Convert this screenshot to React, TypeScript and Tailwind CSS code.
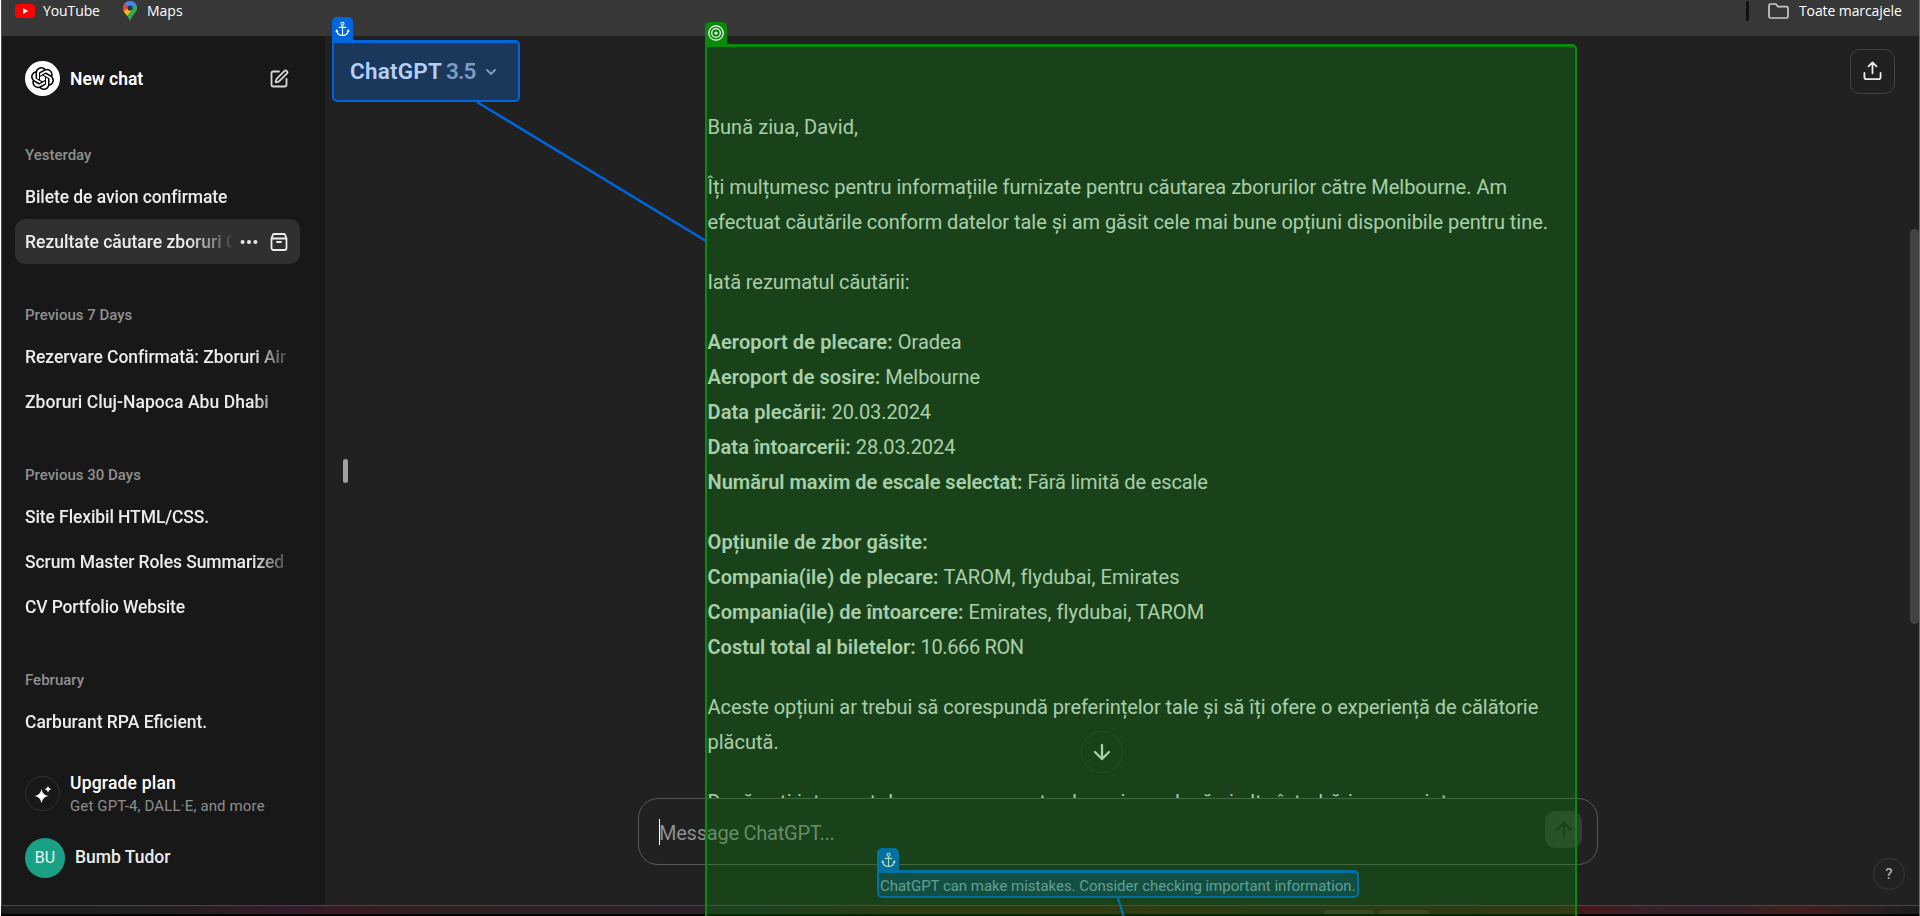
import React from 'react';
import { ArrowDown, ArrowUp, ChevronDown, Ellipsis, SquarePen } from 'lucide-react';
import { SiOpenai } from 'react-icons/si';

function AnchorIcon({ className }: { className: string }) {
  return (
    <svg viewBox="0 0 16 16" className={className} fill="none" stroke="currentColor" strokeWidth="1.2">
      <circle cx="8" cy="2.400" r="1.600" />
      <path d="M8 4v11M4 6.200h8" />
      <path d="M1.800 9.200c.2 3.400 2.600 5.600 6.200 5.700 3.600-.1 6-2.300 6.200-5.700M.9 11l.9-1.800 1.300 1.500M12.900 10.700l1.300-1.500.9 1.800" />
    </svg>
  );
}

function TargetIcon({ className }: { className: string }) {
  return (
    <svg viewBox="0 0 16 16" className={className} fill="none" stroke="currentColor" strokeWidth="1.2">
      <circle cx="8" cy="8" r="7.2" />
      <circle cx="8" cy="8" r="4.300" />
      <circle cx="8" cy="8" r="1" fill="currentColor" />
    </svg>
  );
}

function ArchiveIcon() {
  return (
    <svg viewBox="0 0 18 18" className="h-[18px] w-[18px]" fill="none" stroke="currentColor" strokeWidth="1.800" strokeLinejoin="round" strokeLinecap="round">
      <path d="M1.500 5.500 3 1.600Q3.300 1 4 1h10q.7 0 1 .6l1.500 3.900V15a2 2 0 0 1-2 2h-11a2 2 0 0 1-2-2Z" />
      <path d="M1.700 5.500h14.600M7 9h4" />
    </svg>
  );
}

function ShareIcon() {
  return (
    <svg viewBox="0 0 20 20" className="h-[19px] w-[19px]" fill="none" stroke="currentColor" strokeWidth="1.900" strokeLinecap="round" strokeLinejoin="round">
      <path d="M10 13V1.500M5.800 5.700 10 1.500l4.200 4.200M1.500 12.500v4.500a2 2 0 0 0 2 2h13a2 2 0 0 0 2-2v-4.500" />
    </svg>
  );
}

function BookmarksBar() {
  return (
    <header className="flex h-9 shrink-0 items-start bg-[#373737] pl-[13px] font-['Open_Sans',sans-serif] text-[14px] leading-[22px] text-white">
      <svg viewBox="0 0 20 14" className="mt-1 h-[14px] w-5">
        <rect width="20" height="14" rx="3.500" fill="#ff0000" />
        <path d="M8 4v6l5.200-3Z" fill="#fff" />
      </svg>
      <span className="ml-[8px] w-[80px] tracking-[-0.1px]">YouTube</span>
      <svg viewBox="0 0 14 20" className="mt-px h-5 w-[14px]">
        <clipPath id="pin">
          <path d="M7 0a7 7 0 0 1 7 7c0 4.500-4.500 6.500-7 13C4.500 13.500 0 11.500 0 7a7 7 0 0 1 7-7Z" />
        </clipPath>
        <g clipPath="url(#pin)">
          <rect width="14" height="20" fill="#34a853" />
          <path d="M0 13V6l4-1 5 4-6 7Z" fill="#fbbc04" />
          <path d="M0 9V2l2.500-.5L6 5 1.500 10Z" fill="#ea4335" />
          <path d="M2 2 7-1h4l2 4-7 7-2-4Z" fill="#4285f4" />
          <path d="m13 3-5 5 6 1V3Z" fill="#34a853" />
        </g>
        <circle cx="7" cy="7" r="2.600" fill="#26344f" />
      </svg>
      <span className="ml-[10px]">Maps</span>
      <span className="ml-auto mt-px h-5 w-[3px] rounded bg-[#111]" />
      <svg viewBox="0 0 21 16" className="ml-[19px] mt-[3px] h-4 w-[21px]" fill="none" stroke="#c8c8c8" strokeWidth="1.700" strokeLinejoin="round">
        <path d="M1 2.500Q1 1 2.500 1h5.300l2.200 2.600h8.500q1.500 0 1.500 1.500v8.400q0 1.500-1.500 1.500h-16Q1 15 1 13.500Z" />
      </svg>
      <span className="ml-[10px] mr-[16px] w-[104px] whitespace-nowrap tracking-[-0.1px]">Toate marcajele</span>
    </header>
  );
}

function Section({ label, children }: { label: string; children: React.ReactNode }) {
  return (
    <section className="mb-[31px]">
      <h3 className="flex h-[39px] items-center pl-[10px] text-[15px] font-medium text-[#909090]">{label}</h3>
      {children}
    </section>
  );
}

function Chat({ title, tracking = '' }: { title: string; tracking?: string }) {
  return (
    <div className="flex h-[45px] items-center pl-[10px]">
      <span className={`w-[263px] overflow-hidden whitespace-nowrap font-medium [mask-image:linear-gradient(to_right,#000_228px,transparent_270px)] ${tracking}`}>{title}</span>
    </div>
  );
}

function Sidebar() {
  return (
    <aside className="flex w-[323px] shrink-0 flex-col bg-[#181818] pl-[13px] pr-[25px] pt-[19px] text-[17.5px] leading-6 text-[#ececec]">
      <div className="mb-[34px] mt-px flex h-[45px] items-center pl-[10px] pr-[11px]">
        <span className="flex h-[35px] w-[35px] items-center justify-center rounded-full bg-white text-black">
          <SiOpenai className="h-[23px] w-[23px]" />
        </span>
        <span className="ml-[10px] font-semibold text-white">New chat</span>
        <SquarePen className="ml-auto h-[20px] w-[20px] text-[#d4d4d4]" strokeWidth={2.2} />
      </div>
      <Section label="Yesterday">
        <Chat title="Bilete de avion confirmate" tracking="tracking-[-0.08px]" />
        <div className="flex h-[45px] items-center rounded-[10px] bg-[#303030] pl-[10px] pr-[12px]">
          <span className="w-[206px] overflow-hidden whitespace-nowrap font-medium [mask-image:linear-gradient(to_right,#000_162px,transparent_212px)]">Rezultate căutare zboruri Cluj</span>
          <Ellipsis className="ml-[7px] h-[22px] w-[22px] shrink-0" strokeWidth={2.4} />
          <span className="ml-auto"><ArchiveIcon /></span>
        </div>
      </Section>
      <Section label="Previous 7 Days">
        <Chat title="Rezervare Confirmată: Zboruri Air" tracking="tracking-[-0.05px]" />
        <Chat title="Zboruri Cluj-Napoca Abu Dhabi" tracking="tracking-[0.06px]" />
      </Section>
      <Section label="Previous 30 Days">
        <Chat title="Site Flexibil HTML/CSS." tracking="tracking-[-0.1px]" />
        <Chat title="Scrum Master Roles Summarized" tracking="tracking-[-0.09px]" />
        <Chat title="CV Portfolio Website" tracking="tracking-[-0.14px]" />
      </Section>
      <Section label="February">
        <Chat title="Carburant RPA Eficient." />
      </Section>
      <div className="-mt-[4px] flex h-[45px] items-center pl-[10px]">
        <span className="flex h-[35px] w-[35px] items-center justify-center rounded-full border border-[#303030] text-white">
          <svg viewBox="0 0 18 18" className="h-[18px] w-[18px]" fill="currentColor">
            <path d="M7.500 4Q8.500 10 14.500 11 8.500 12 7.500 18 6.500 12 .5 11 6.500 10 7.500 4ZM14 1q.5 2.700 3.200 3.200Q14.500 4.700 14 7.400 13.500 4.700 10.800 4.200 13.500 3.700 14 1Z" />
          </svg>
        </span>
        <div className="ml-[10px] flex flex-col pt-[2px]">
          <span className="font-medium leading-[23px] tracking-[0.2px] text-white">Upgrade plan</span>
          <span className="text-[15px] leading-[22px] tracking-[0.14px] text-[#8e8e8e]">Get GPT-4, DALL·E, and more</span>
        </div>
      </div>
      <div className="mt-[22px] flex h-10 items-center pl-[10px]">
        <span className="flex h-10 w-10 items-center justify-center rounded-full bg-[#19a085] text-[16px] text-white/90">BU</span>
        <span className="ml-[10px] pb-[2px] font-medium">Bumb Tudor</span>
      </div>
    </aside>
  );
}

function Conversation() {
  return (
    <article className="flex h-[762px] flex-col gap-[25px] overflow-hidden whitespace-nowrap pl-[382.5px] pt-[74px] text-[20px] leading-[35px] text-[#ececec] [&_b]:font-semibold">
      <p className="tracking-[0.06px]">Bună ziua, David,</p>
      <p>
        Îți mulțumesc pentru informațiile furnizate pentru căutarea zborurilor către Melbourne. Am<br />
        <span className="tracking-[-0.045px]">efectuat căutările conform datelor tale și am găsit cele mai bune opțiuni disponibile pentru tine.</span>
      </p>
      <p className="tracking-[-0.07px]">Iată rezumatul căutării:</p>
      <p>
        <b className="tracking-[0.12px]">Aeroport de plecare:</b> Oradea<br />
        <b className="tracking-[0.06px]">Aeroport de sosire:</b> Melbourne<br />
        <b className="tracking-[0.1px]">Data plecării:</b> <span className="tracking-[-0.1px]">20.03.2024</span><br />
        <b className="tracking-[0.05px]">Data întoarcerii:</b> <span className="tracking-[-0.1px]">28.03.2024</span><br />
        <b>Numărul maxim de escale selectat:</b> <span className="tracking-[-0.12px]">Fără limită de escale</span>
      </p>
      <p>
        <b className="tracking-[0.1px]">Opțiunile de zbor găsite:</b><br />
        <b className="tracking-[0.06px]">Compania(ile) de plecare:</b> <span className="tracking-[0.06px]">TAROM, flydubai, Emirates</span><br />
        <b className="tracking-[0.06px]">Compania(ile) de întoarcere:</b> <span className="tracking-[0.06px]">Emirates, flydubai, TAROM</span><br />
        <b>Costul total al biletelor:</b> <span className="tracking-[-0.36px]">10.666 RON</span>
      </p>
      <p>
        <span className="tracking-[-0.045px]">Aceste opțiuni ar trebui să corespundă preferințelor tale și să îți ofere o experiență de călătorie</span><br />
        plăcută.
      </p>
      <p className="tracking-[0.18px]">Dacă ești interesat de a rezerva aceste zboruri sau dacă ai alte întrebări sau cerințe,</p>
    </article>
  );
}

function Main() {
  return (
    <main className="flex grow flex-col bg-[#212121]">
      <Conversation />
      <div className="ml-[313px] flex h-[67px] w-[960px] shrink-0 items-center rounded-[20px] border border-[#585858] pl-[20px] pr-[15px]">
        <span className="h-[26px] w-px bg-white" />
        <span className="-ml-px pt-[3px] text-[20px] leading-[30px] tracking-[-0.23px] text-[#8e8e8e]">Message ChatGPT...</span>
        <span className="mb-[4px] ml-auto flex h-[37px] w-[37px] items-center justify-center rounded-[10px] bg-[#393939] text-[#212121]">
          <ArrowUp className="h-[24px] w-[24px]" strokeWidth={2.3} />
        </span>
      </div>
      <p className="ml-[555px] mt-[10px] whitespace-nowrap text-[15px] leading-[22px] tracking-[-0.03px] text-[#c4c4c4]">
        ChatGPT can make mistakes. Consider checking important information.
      </p>
    </main>
  );
}

export default function App() {
  return (
    <div className="relative flex h-[916px] w-[1920px] flex-col overflow-hidden border-l border-r border-l-white border-r-[#6b6b6b] bg-black font-['Roboto','Liberation_Sans',sans-serif]">
      <div className="flex h-[905px] shrink-0 flex-col border-l border-[#4a4a4a]">
        <BookmarksBar />
        <div className="flex h-[869px]">
          <Sidebar />
          <Main />
        </div>
      </div>
      <footer className="flex h-[9px] shrink-0 items-end border-t border-[#484848] bg-[linear-gradient(to_right,#1d1e20_0px,#1f1e20_130px,#2a1e22_210px,#34192b_290px,#3b1a22_350px,#2f1f20_430px,#2b2028_700px,#26202c_760px,#401a14_900px,#441a12_1150px,#381a1c_1300px,#401814_1400px,#481818_1580px,#3a1e28_1640px,#33202a_1710px,#401e1c_1790px,#431c1c_1810px,#2a2022_1870px,#1c1c1e_1920px)] pl-[1323px]">
        <span className="h-1 w-[50px] rounded-t-md bg-white/10" />
        <span className="ml-[5px] h-1 w-[50px] rounded-t-md bg-white/10" />
      </footer>

      {/* Floating controls */}
      <button className="absolute left-[1849px] top-[49px] flex h-[45px] w-[45px] items-center justify-center rounded-[10px] border border-[#424242] pb-[2px] pr-px text-[#ececec]">
        <ShareIcon />
      </button>
      <button className="absolute left-[1080px] top-[731px] flex h-[42px] w-[42px] items-center justify-center rounded-full border border-[#343434] bg-[#212121] text-[#ececec]">
        <ArrowDown className="h-[24px] w-[24px]" strokeWidth={2.3} />
      </button>
      <button className="absolute left-[1872px] top-[858px] flex h-8 w-8 items-center justify-center rounded-full border border-[#383838] text-[15px] font-medium text-[#b0b0b0]">?</button>
      <span className="absolute left-[342px] top-[459px] h-[24px] w-[5px] rounded-full bg-[#a0a0a0]" />
      <span className="absolute left-[1909px] top-[229px] h-[395px] w-[9px] rounded-full bg-[#424242]" />

      {/* Anchor: disclaimer */}
      <div className="absolute left-[876px] top-[848px] flex h-[23px] w-[22px] items-center justify-center rounded-t-[5px] bg-[#0066e0] text-white">
        <AnchorIcon className="h-[16px] w-[15px]" />
      </div>
      <div className="absolute left-[876px] top-[870px] h-[28px] w-[482px] rounded-[5px] rounded-tl-none bg-[#0066e0]/30" />
      <div className="absolute left-[876px] top-[870px] h-[28px] w-[482px] rounded-[5px] rounded-tl-none border-[2.5px] border-t-[3px] border-[#0066e0]" />

      {/* Anchor: model name */}
      <div className="absolute left-[331px] top-[17px] flex h-[23px] w-[21px] items-center justify-center rounded-t-[5px] bg-[#0066e0] text-white">
        <AnchorIcon className="h-[16px] w-[15px]" />
      </div>
      <div className="absolute left-[331px] top-[40px] flex h-[62px] w-[188px] items-center rounded-[5px] rounded-tl-none border-2 border-t-[3px] border-[#0066e0] bg-[#1b375a] pl-[16px] pt-[1px] text-[22.5px] font-semibold">
        <span className="tracking-[0.2px] text-[#b4d0f8]">ChatGPT</span>
        <span className="ml-[4px] tracking-[-0.8px] text-[#7d9cc6]">3.5</span>
        <ChevronDown className="ml-[7px] h-[16px] w-[16px] text-[#7d9cc6]" strokeWidth={2.800} />
      </div>
      <svg className="absolute left-0 top-0 h-[916px] w-[1918px]" fill="none" stroke="#0066e0" strokeWidth="2.500">
        <path d="M476 102 705 241M1117 898 1122.500 916" />
      </svg>

      {/* Target region */}
      <div className="absolute left-[704px] top-[22px] flex h-[22px] w-[22px] items-center justify-center rounded-t-[5px] bg-[#088a0b] text-white">
        <TargetIcon className="h-[16px] w-[16px]" />
      </div>
      <div className="absolute left-[704px] top-[44px] h-[880px] w-[872px] rounded-[5px] rounded-tl-none bg-[#088a0b]/30" />
      <div className="absolute left-[704px] top-[44px] h-[880px] w-[872px] rounded-[5px] rounded-tl-none border-2 border-t-[3px] border-[#088a0b]" />
    </div>
  );
}
